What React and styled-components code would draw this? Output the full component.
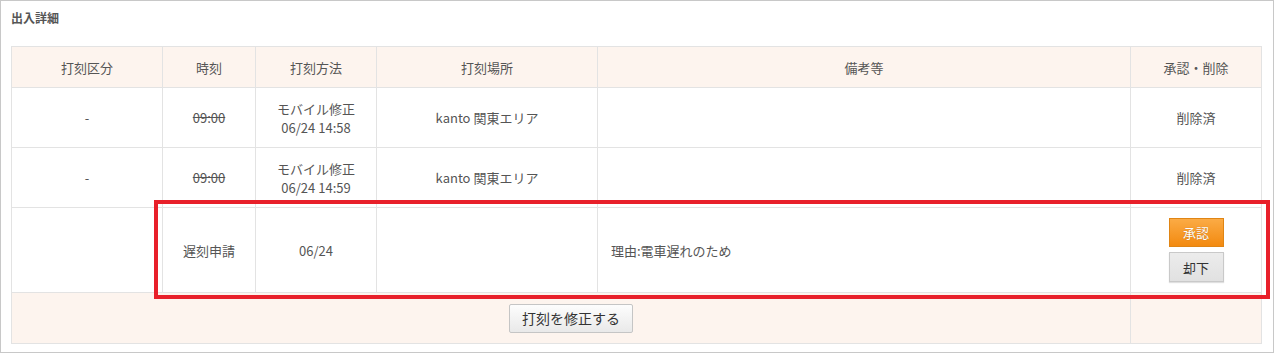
import React from "react";
import styled, { createGlobalStyle } from "styled-components";

const GlobalStyle = createGlobalStyle`
body {
  margin: 0;
  font-family: "Noto Sans CJK JP", "Noto Sans", sans-serif;
  color: #555;
  background: #fff;
}
`

const Panel = styled.div`
box-sizing: border-box;
width: 1274px;
height: 353px;
border: 1px solid #c8c8c8;
padding: 10px 0 0 10px;
`

const Title = styled.h3`
margin: 0 0 21px 0;
font-size: 12px;
font-weight: bold;
line-height: 14px;
color: #555;
`

const TableWrap = styled.div`
position: relative;
width: 1250px;
`

const Table = styled.table`
width: 1250px;
border-collapse: collapse;
table-layout: fixed;
font-size: 13px;
color: #555;

th, td {
  border: 1px solid #e3e3e3;
  text-align: center;
  vertical-align: middle;
  padding: 0;
  line-height: 19px;
}
th {
  background: #fdf4ee;
  font-weight: normal;
  height: 40px;
}
`

const Row = styled.tr`
height: ${(p) => p.$h}px;
`

const Cell = styled.td`
text-align: ${(p) => (p.$left ? "left" : "center")} !important;
padding-left: ${(p) => (p.$left ? "13px" : "0")} !important;
background: ${(p) => (p.$shade ? "#fdf4ee" : "#fff")};
`

const Struck = styled.span`
text-decoration: line-through;
`

const Highlight = styled.div`
position: absolute;
left: 143px;
top: 154px;
width: 1116px;
height: 99px;
box-sizing: border-box;
border: 4px solid #e8202a;
pointer-events: none;
`

const ButtonStack = styled.div`
display: flex;
flex-direction: column;
align-items: center;
gap: 5px;
`

const SmallButton = styled.button`
box-sizing: border-box;
width: 55px;
height: ${(p) => (p.$primary ? 29 : 30)}px;
padding: 0;
font-family: inherit;
font-size: 13px;
cursor: pointer;
border: 1px solid ${(p) => (p.$primary ? "#e08514" : "#c9c9c9")};
color: ${(p) => (p.$primary ? "#fff" : "#333")};
text-shadow: ${(p) => (p.$primary ? "0 0 1px rgba(140,70,0,0.6)" : "none")};
background: ${(p) =>
  p.$primary
    ? "linear-gradient(#fbab45, #f38a10)"
    : "linear-gradient(#ececec, #e1e1e1)"};
box-shadow: ${(p) => (p.$primary ? "none" : "0 1px 1px rgba(0,0,0,0.12)")};
`

const FixButton = styled.button`
box-sizing: border-box;
width: 124px;
height: 29px;
padding: 0;
font-family: inherit;
font-size: 14px;
color: #333;
border: 1px solid #c5c5c5;
border-radius: 2px;
background: linear-gradient(#fdfdfd, #e9e9e9);
cursor: pointer;
`

const rows = [
  { kind: "-", time: "09:00", method: "モバイル修正", at: "06/24 14:58", place: "kanto 関東エリア" },
  { kind: "-", time: "09:00", method: "モバイル修正", at: "06/24 14:59", place: "kanto 関東エリア" },
];

function App() {
  return (
    <Panel>
      <GlobalStyle />
      <Title>出入詳細</Title>
      <TableWrap>
        <Table>
          <colgroup>
            <col style={{ width: 151 }} />
            <col style={{ width: 93 }} />
            <col style={{ width: 121 }} />
            <col style={{ width: 221 }} />
            <col style={{ width: 533 }} />
            <col style={{ width: 131 }} />
          </colgroup>
          <thead>
            <tr>
              <th>打刻区分</th>
              <th>時刻</th>
              <th>打刻方法</th>
              <th>打刻場所</th>
              <th>備考等</th>
              <th>承認・削除</th>
            </tr>
          </thead>
          <tbody>
            {rows.map((r, i) => (
              <Row $h={60} key={i}>
                <Cell>{r.kind}</Cell>
                <Cell><Struck>{r.time}</Struck></Cell>
                <Cell>{r.method}<br />{r.at}</Cell>
                <Cell>{r.place}</Cell>
                <Cell></Cell>
                <Cell>削除済</Cell>
              </Row>
            ))}
            <Row $h={85}>
              <Cell></Cell>
              <Cell>遅刻申請</Cell>
              <Cell>06/24</Cell>
              <Cell></Cell>
              <Cell $left>理由:電車遅れのため</Cell>
              <Cell>
                <ButtonStack>
                  <SmallButton $primary>承認</SmallButton>
                  <SmallButton>却下</SmallButton>
                </ButtonStack>
              </Cell>
            </Row>
            <Row $h={51}>
              <Cell $shade colSpan={5}>
                <FixButton>打刻を修正する</FixButton>
              </Cell>
              <Cell $shade></Cell>
            </Row>
          </tbody>
        </Table>
        <Highlight />
      </TableWrap>
    </Panel>
  )
}

export default App;
